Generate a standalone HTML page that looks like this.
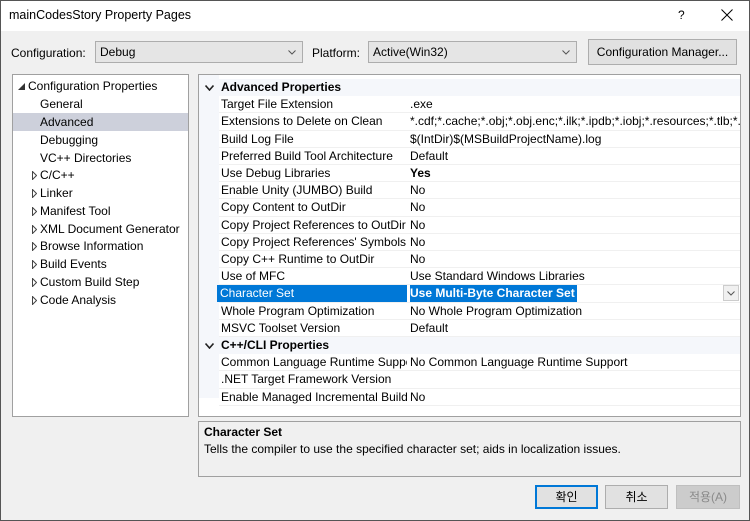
<!DOCTYPE html>
<html><head><meta charset="utf-8"><style>
*{margin:0;padding:0;box-sizing:border-box}
body{width:750px;height:521px;overflow:hidden;background:#f0f0f0;font-family:"Liberation Sans","Noto Sans CJK KR",sans-serif;font-size:12px;color:#000;position:relative}
.a{position:absolute;white-space:nowrap}
#win{position:absolute;left:0;top:0;width:750px;height:521px;border:1px solid #555}
.title{left:1px;top:1px;width:748px;height:30px;background:#fff}
.combo{background:#e5e5e5;border:1px solid #adadad;height:22px;line-height:20px;padding-left:4px}
.combo svg{position:absolute;right:6px;top:8px}
.btn{background:#e1e1e1;border:1px solid #adadad;height:24px;line-height:22px;text-align:center}
.tree{left:12px;top:74px;width:177px;height:343px;background:#fff;border:1px solid #a0a0a0}
.ti{position:absolute;left:0;width:175px;height:18px;line-height:18px}
.ti svg{position:absolute;left:19px;top:5px}
.grid{left:198px;top:74px;width:543px;height:343px;background:#fff;border:1px solid #a0a0a0;overflow:hidden}
.gut{position:absolute;left:0;top:0;width:20px;height:323px;background:#f5f7fb}
.r{position:absolute;left:20px;width:521px;height:17.2px;line-height:17px;border-bottom:1px solid #f0f0f0}
.r .n{position:absolute;left:2px;width:186px;overflow:hidden}
.r .v{position:absolute;left:191px}
.h{position:absolute;left:0;width:541px;height:17.2px;line-height:17px;background:#f5f7fb;font-weight:bold}
.h svg{position:absolute;left:6px;top:6px}
.desc{left:198px;top:421px;width:543px;height:56px;border:1px solid #a0a0a0;background:#f0f0f0}
</style></head><body>
<div id="win"></div>
<div class="a title"></div>
<div class="a" style="left:9px;top:8px;font-size:12.5px">mainCodesStory Property Pages</div>
<div class="a" style="left:678px;top:8px;font-size:12px">?</div>
<svg class="a" style="left:721px;top:9px" width="12" height="12"><path d="M0.5 0.5L11.5 11.5M11.5 0.5L0.5 11.5" stroke="#000" stroke-width="1"/></svg>

<div class="a" style="left:11px;top:46px">Configuration:</div>
<div class="a combo" style="left:95px;top:41px;width:208px">Debug<svg width="8" height="5"><path d="M0.5 0.5L4 4L7.5 0.5" stroke="#555" fill="none"/></svg></div>
<div class="a" style="left:312px;top:46px">Platform:</div>
<div class="a combo" style="left:368px;top:41px;width:209px">Active(Win32)<svg width="8" height="5"><path d="M0.5 0.5L4 4L7.5 0.5" stroke="#555" fill="none"/></svg></div>
<div class="a btn" style="left:588px;top:39px;width:149px;height:26px;line-height:24px">Configuration Manager...</div>

<div class="a tree">
<div class="ti" style="top:2px;padding-left:15px"><svg style="left:5px;top:6px" width="7" height="7"><path d="M7 0L7 7L0 7Z" fill="#333"/></svg>Configuration Properties</div>
<div class="ti" style="top:20px;padding-left:27px">General</div>
<div class="ti" style="top:38px;padding-left:27px;background:#cdd0db">Advanced</div>
<div class="ti" style="top:56px;padding-left:27px">Debugging</div>
<div class="ti" style="top:74px;padding-left:27px">VC++ Directories</div>
<div class="ti" style="top:91px;padding-left:27px"><svg width="5" height="9"><path d="M0.5 0.5L4.5 4.5L0.5 8.5Z" stroke="#444" fill="none"/></svg>C/C++</div>
<div class="ti" style="top:109px;padding-left:27px"><svg width="5" height="9"><path d="M0.5 0.5L4.5 4.5L0.5 8.5Z" stroke="#444" fill="none"/></svg>Linker</div>
<div class="ti" style="top:127px;padding-left:27px"><svg width="5" height="9"><path d="M0.5 0.5L4.5 4.5L0.5 8.5Z" stroke="#444" fill="none"/></svg>Manifest Tool</div>
<div class="ti" style="top:145px;padding-left:27px"><svg width="5" height="9"><path d="M0.5 0.5L4.5 4.5L0.5 8.5Z" stroke="#444" fill="none"/></svg>XML Document Generator</div>
<div class="ti" style="top:162px;padding-left:27px"><svg width="5" height="9"><path d="M0.5 0.5L4.5 4.5L0.5 8.5Z" stroke="#444" fill="none"/></svg>Browse Information</div>
<div class="ti" style="top:180px;padding-left:27px"><svg width="5" height="9"><path d="M0.5 0.5L4.5 4.5L0.5 8.5Z" stroke="#444" fill="none"/></svg>Build Events</div>
<div class="ti" style="top:198px;padding-left:27px"><svg width="5" height="9"><path d="M0.5 0.5L4.5 4.5L0.5 8.5Z" stroke="#444" fill="none"/></svg>Custom Build Step</div>
<div class="ti" style="top:216px;padding-left:27px"><svg width="5" height="9"><path d="M0.5 0.5L4.5 4.5L0.5 8.5Z" stroke="#444" fill="none"/></svg>Code Analysis</div>
</div>

<div class="a grid">
<div class="gut"></div>
<div class="h" style="top:4px"><svg width="9" height="6"><path d="M0.5 0.5L4.5 5L8.5 0.5" stroke="#222" stroke-width="1.6" fill="none"/></svg><span style="position:absolute;left:22px">Advanced Properties</span></div>
<div class="r" style="top:21.2px"><span class="n">Target File Extension</span><span class="v">.exe</span></div>
<div class="r" style="top:38.4px"><span class="n">Extensions to Delete on Clean</span><span class="v">*.cdf;*.cache;*.obj;*.obj.enc;*.ilk;*.ipdb;*.iobj;*.resources;*.tlb;*.tli;</span></div>
<div class="r" style="top:55.6px"><span class="n">Build Log File</span><span class="v">$(IntDir)$(MSBuildProjectName).log</span></div>
<div class="r" style="top:72.8px"><span class="n">Preferred Build Tool Architecture</span><span class="v">Default</span></div>
<div class="r" style="top:90px"><span class="n">Use Debug Libraries</span><span class="v" style="font-weight:bold">Yes</span></div>
<div class="r" style="top:107.2px"><span class="n">Enable Unity (JUMBO) Build</span><span class="v">No</span></div>
<div class="r" style="top:124.4px"><span class="n">Copy Content to OutDir</span><span class="v">No</span></div>
<div class="r" style="top:141.6px"><span class="n">Copy Project References to OutDir</span><span class="v">No</span></div>
<div class="r" style="top:158.8px"><span class="n">Copy Project References' Symbols to OutDir</span><span class="v">No</span></div>
<div class="r" style="top:176px"><span class="n">Copy C++ Runtime to OutDir</span><span class="v">No</span></div>
<div class="r" style="top:193.2px"><span class="n">Use of MFC</span><span class="v">Use Standard Windows Libraries</span></div>
<div class="r" style="top:210.4px"><span class="n" style="background:#0078d7;color:#fff;left:-2px;padding-left:3px;width:190px">Character Set</span><span class="v" style="background:#0078d7;color:#fff;font-weight:bold;padding-right:2px">Use Multi-Byte Character Set</span><span style="position:absolute;right:1px;top:0;width:16px;height:16px;border:1px solid #ccc;background:#f0f0f0"><svg style="position:absolute;left:3px;top:5px" width="8" height="5"><path d="M0.5 0.5L4 4L7.5 0.5" stroke="#555" fill="none"/></svg></span></div>
<div class="r" style="top:227.6px"><span class="n">Whole Program Optimization</span><span class="v">No Whole Program Optimization</span></div>
<div class="r" style="top:244.8px"><span class="n">MSVC Toolset Version</span><span class="v">Default</span></div>
<div class="h" style="top:262px"><svg width="9" height="6"><path d="M0.5 0.5L4.5 5L8.5 0.5" stroke="#222" stroke-width="1.6" fill="none"/></svg><span style="position:absolute;left:22px">C++/CLI Properties</span></div>
<div class="r" style="top:279.2px"><span class="n">Common Language Runtime Support</span><span class="v">No Common Language Runtime Support</span></div>
<div class="r" style="top:296.4px"><span class="n">.NET Target Framework Version</span><span class="v"></span></div>
<div class="r" style="top:313.6px"><span class="n">Enable Managed Incremental Build</span><span class="v">No</span></div>
</div>

<div class="a desc">
<div class="a" style="left:5px;top:3px;font-weight:bold">Character Set</div>
<div class="a" style="left:5px;top:20px">Tells the compiler to use the specified character set; aids in localization issues.</div>
</div>

<div class="a btn" style="left:535px;top:485px;width:63px;border:2px solid #0078d7;line-height:20px">확인</div>
<div class="a btn" style="left:605px;top:485px;width:63px">취소</div>
<div class="a btn" style="left:676px;top:485px;width:64px;background:#ccc;border-color:#bfbfbf;color:#8a8a8a">적용(A)</div>
</body></html>
